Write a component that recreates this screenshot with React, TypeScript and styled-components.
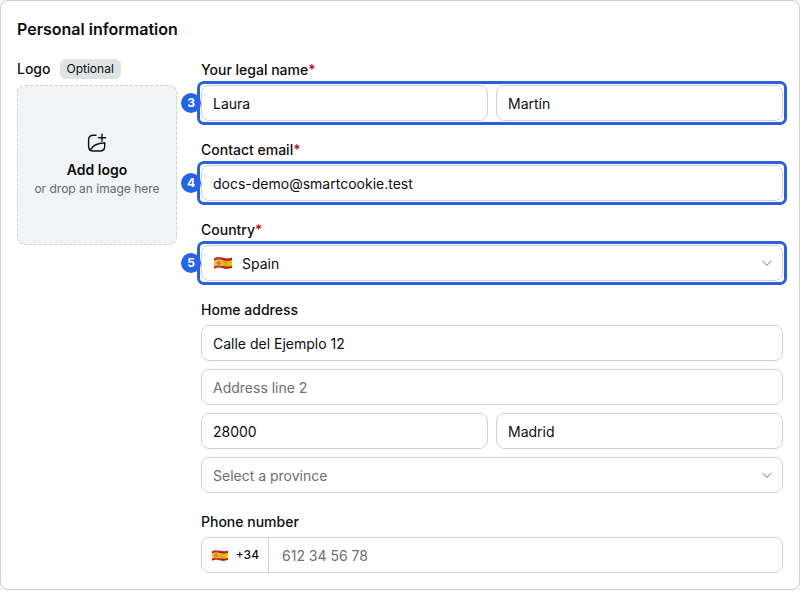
import React, { useId } from 'react';
import styled, { createGlobalStyle } from 'styled-components';

const GlobalStyle = createGlobalStyle`
  *, *::before, *::after { box-sizing: border-box; }
  body {
    margin: 0;
    background: #f7f9f9;
    color: #0c0e0f;
    font-family: Inter, "Open Sans", sans-serif;
    font-size: 14px;
    line-height: 20px;
  }
  input, select, button { font: inherit; color: inherit; }
`;

const Card = styled.section`
  padding: 16px;
  background: #fff;
  border: 1px solid #cdd1d2;
  border-radius: 8px;
`;

const Title = styled.h2`
  margin: 0 0 16px;
  font-size: 16px;
  line-height: 24px;
  font-weight: 600;
`;

const Columns = styled.div`
  display: grid;
  grid-template-columns: 160px minmax(0, 1fr);
  column-gap: 24px;
`;

const LogoColumn = styled.div`
  display: flex;
  flex-direction: column;
  gap: 4px;
`;

const LogoHeading = styled.div`
  display: flex;
  align-items: center;
  gap: 9px;
  height: 24px;
  font-weight: 500;
`;

const Pill = styled.span`
  padding: 0 7px;
  border-radius: 6px;
  background: #dfe3e4;
  font-size: 12px;
  font-weight: 400;
`;

const DropZone = styled.button`
  display: flex;
  flex-direction: column;
  align-items: center;
  justify-content: center;
  width: 100%;
  height: 160px;
  padding: 0;
  border: 1px dashed #cdd1d2;
  border-radius: 8px;
  background: #f0f4f7;
  cursor: pointer;
`;

const DropTitle = styled.span`
  margin-top: 7px;
  font-weight: 600;
`;

const DropHint = styled.span`
  font-size: 12px;
  line-height: 18px;
  color: #65696b;
`;

const Form = styled.form`
  display: flex;
  flex-direction: column;
  gap: 19px;
  padding-top: 3px;
`;

const FieldSet = styled.div`
  display: flex;
  flex-direction: column;
  gap: 8px;
`;

const Label = styled.label`
  height: 20px;
  margin-bottom: -3px;
  font-weight: 500;
`;

const Required = styled.span`
  color: #b80f1c;
`;

const Row = styled.div<{ $marked?: boolean }>`
  position: relative;
  display: flex;
  gap: 8px;
  border-radius: 3px;
  outline: ${(p) => (p.$marked ? '3px solid #2861d8' : 'none')};
  outline-offset: 1px;
`;

const Step = styled.span`
  position: absolute;
  left: -20px;
  top: 8px;
  width: 20px;
  height: 20px;
  border-radius: 50%;
  background: #2563eb;
  color: #fff;
  font-size: 12px;
  font-weight: 700;
  text-align: center;
`;

const Box = styled.div`
  display: flex;
  flex: 1;
  align-items: center;
  min-width: 0;
  height: 36px;
  border: 1px solid #cdd1d2;
  border-radius: 8px;
  background: #fff;
`;

const TextInput = styled.input`
  flex: 1;
  width: 100%;
  min-width: 0;
  height: 100%;
  padding: 0 11px;
  border: 0;
  outline: 0;
  background: transparent;
  &::placeholder { color: #6b6f71; opacity: 1; }
`;

const PhoneInput = styled(TextInput)`
  padding-left: 13px;
`;

const SelectBox = styled(Box)`
  padding: 0 9px 0 11px;
  gap: 9px;
`;

const Select = styled.select<{ $empty?: boolean }>`
  flex: 1;
  min-width: 0;
  height: 100%;
  padding: 2px 0 0;
  border: 0;
  outline: 0;
  appearance: none;
  background: transparent;
  color: ${(p) => (p.$empty ? '#6b6f71' : 'inherit')};
`;

const Prefix = styled.button`
  display: flex;
  align-items: center;
  justify-content: space-between;
  width: 67px;
  height: 100%;
  padding: 0 9px;
  border: 0;
  border-right: 1px solid #cdd1d2;
  background: transparent;
  font-size: 12px;
  font-weight: 500;
`;

function Flag({ width }: { width: number }) {
  const id = useId();
  const wave = 'M1 2.4C4 .6 7 1 10 1.8s6 .9 9-.4v10.4c-3 1.3-6 1.2-9 .4s-6-1-9 .6z';
  return (
    <svg width={width} height={Math.round(width * 0.7)} viewBox="0 0 20 14" aria-hidden="true">
      <defs>
        <clipPath id={id}><path d={wave} /></clipPath>
        <linearGradient id={id + 'g'}>
          <stop offset="0" stopColor="#000" stopOpacity=".05" />
          <stop offset=".3" stopColor="#fff" stopOpacity=".15" />
          <stop offset=".6" stopColor="#000" stopOpacity=".16" />
          <stop offset="1" stopColor="#000" stopOpacity=".02" />
        </linearGradient>
      </defs>
      <g clipPath={`url(#${id})`}>
        <path fill="#c91820" d="M0 0h20v14H0z" />
        <path fill="#ffcb13" d="M1 4.6C4 3 7 3.5 10 4.200s6 .9 9-.3v5.800c-3 1.200-6 1-9 .3s-6-1-9 .6z" />
        <path fill="#b5462b" d="M4.800 5.400h2.200v2.800q-1.100 1.300-2.200 0z" />
        <path fill="#7f4b25" d="M3.700 5.800h.6v2.800h-.6zM7.500 5.800h.6v2.800h-.6zM5.200 4.600h1.400v.7H5.200z" />
        <path fill="#e8c8a0" d="M5.900 5.900h.8v1h-.8z" />
        <path fill={`url(#${id}g)`} d="M0 0h20v14H0z" />
      </g>
    </svg>
  );
}

function Chevron() {
  return (
    <svg width="12" height="12" viewBox="0 0 12 12" fill="none" stroke="#6b6f71" aria-hidden="true">
      <path d="M1.500 4 6 8.300 10.500 4" />
    </svg>
  );
}

function AddImageIcon() {
  return (
    <svg width="20" height="20" viewBox="0 0 20 20" fill="none" stroke="#111" strokeWidth="1.400" strokeLinecap="round" strokeLinejoin="round" aria-hidden="true">
      <path d="M9 2.200H6.500Q1.600 2.200 1.600 7v6.200Q1.600 18 6.500 18h6.300q4.900 0 4.900-4.800V10" />
      <path d="M15 1.200v7M11.500 4.700h7" />
      <path d="M3.200 16.800C6.300 12.200 10.500 9.700 17.700 10" />
    </svg>
  );
}

export default function App() {
  return (
    <>
      <GlobalStyle />
      <Card>
        <Title>Personal information</Title>
        <Columns>
          <LogoColumn>
            <LogoHeading>
              Logo <Pill>Optional</Pill>
            </LogoHeading>
            <DropZone type="button">
              <AddImageIcon />
              <DropTitle>Add logo</DropTitle>
              <DropHint>or drop an image here</DropHint>
            </DropZone>
          </LogoColumn>
          <Form>
            <FieldSet>
              <Label htmlFor="first">Your legal name<Required>*</Required></Label>
              <Row $marked>
                <Box><TextInput id="first" defaultValue="Laura" /></Box>
                <Box><TextInput aria-label="Last name" defaultValue="Martín" /></Box>
                <Step>3</Step>
              </Row>
            </FieldSet>
            <FieldSet>
              <Label htmlFor="email">Contact email<Required>*</Required></Label>
              <Row $marked>
                <Box><TextInput id="email" type="email" defaultValue="docs-demo@smartcookie.test" /></Box>
                <Step>4</Step>
              </Row>
            </FieldSet>
            <FieldSet>
              <Label htmlFor="country">Country<Required>*</Required></Label>
              <Row $marked>
                <SelectBox>
                  <Flag width={20} />
                  <Select id="country" defaultValue="es">
                    <option value="es">Spain</option>
                  </Select>
                  <Chevron />
                </SelectBox>
                <Step>5</Step>
              </Row>
            </FieldSet>
            <FieldSet>
              <Label htmlFor="address">Home address</Label>
              <Row><Box><TextInput id="address" defaultValue="Calle del Ejemplo 12" /></Box></Row>
              <Row><Box><TextInput aria-label="Address line 2" placeholder="Address line 2" /></Box></Row>
              <Row>
                <Box><TextInput aria-label="Postal code" defaultValue="28000" /></Box>
                <Box><TextInput aria-label="City" defaultValue="Madrid" /></Box>
              </Row>
              <Row>
                <SelectBox>
                  <Select aria-label="Province" $empty defaultValue="">
                    <option value="">Select a province</option>
                  </Select>
                  <Chevron />
                </SelectBox>
              </Row>
            </FieldSet>
            <FieldSet>
              <Label htmlFor="phone">Phone number</Label>
              <Row>
                <Box>
                  <Prefix type="button"><Flag width={18} />+34</Prefix>
                  <PhoneInput id="phone" type="tel" placeholder="612 34 56 78" />
                </Box>
              </Row>
            </FieldSet>
          </Form>
        </Columns>
      </Card>
    </>
  );
}
